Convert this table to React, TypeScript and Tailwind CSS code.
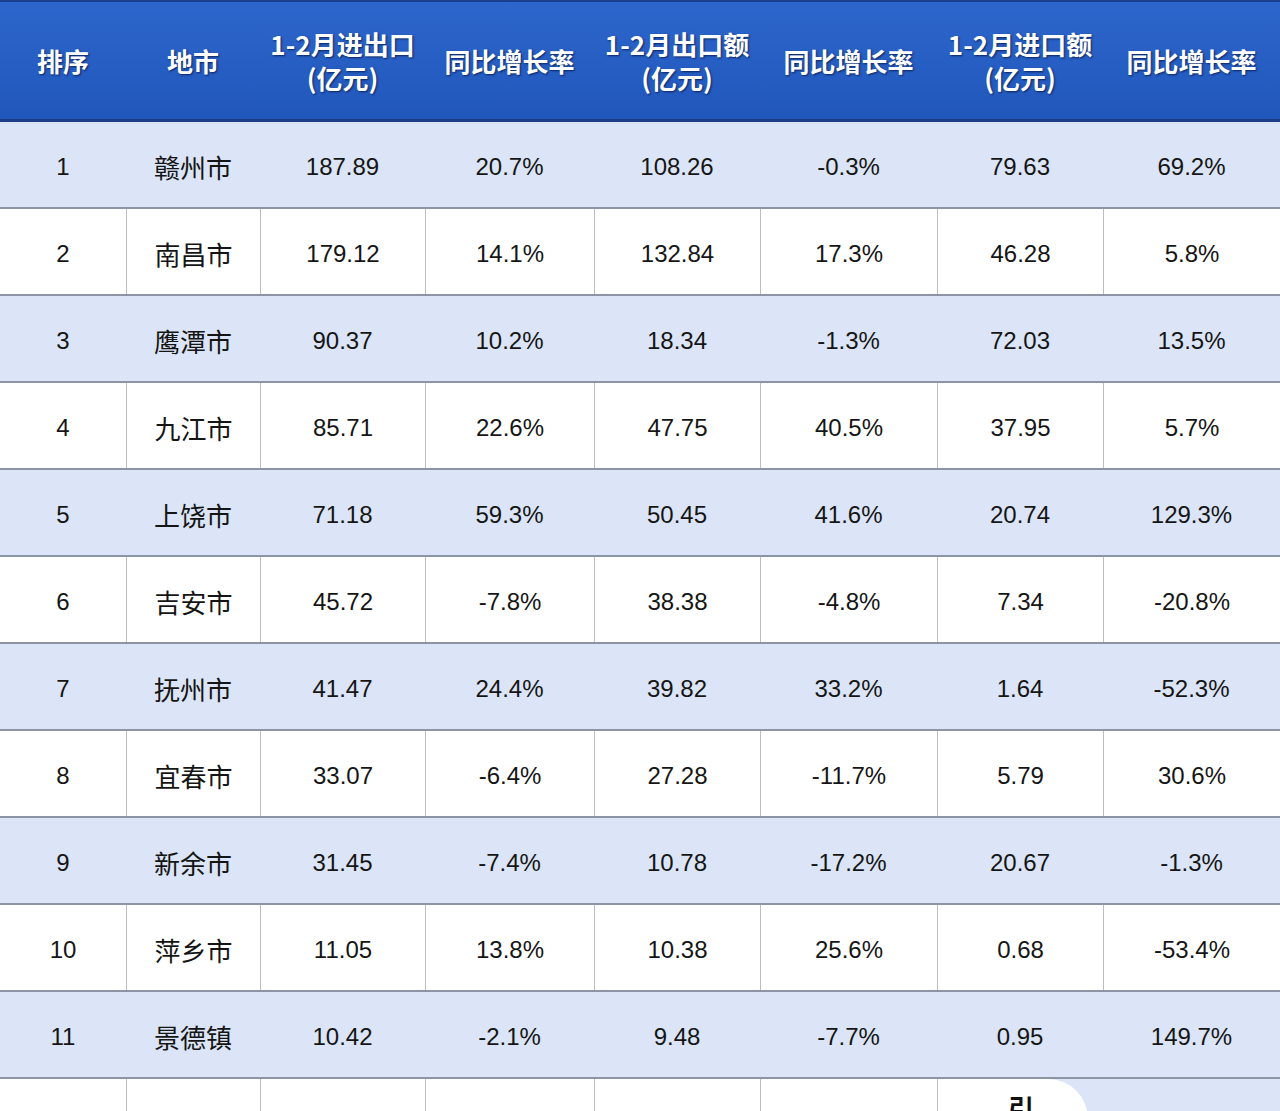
const COLS = ["w-[126px]", "w-[134px]", "w-[165px]", "w-[169px]", "w-[166px]", "w-[177px]", "w-[166px]", "w-[177px]"];

const HEADERS: string[][] = [
  ["排序"],
  ["地市"],
  ["1-2月进出口", "(亿元)"],
  ["同比增长率"],
  ["1-2月出口额", "(亿元)"],
  ["同比增长率"],
  ["1-2月进口额", "(亿元)"],
  ["同比增长率"],
];

const ROWS: string[][] = [
  ["1", "赣州市", "187.89", "20.7%", "108.26", "-0.3%", "79.63", "69.2%"],
  ["2", "南昌市", "179.12", "14.1%", "132.84", "17.3%", "46.28", "5.8%"],
  ["3", "鹰潭市", "90.37", "10.2%", "18.34", "-1.3%", "72.03", "13.5%"],
  ["4", "九江市", "85.71", "22.6%", "47.75", "40.5%", "37.95", "5.7%"],
  ["5", "上饶市", "71.18", "59.3%", "50.45", "41.6%", "20.74", "129.3%"],
  ["6", "吉安市", "45.72", "-7.8%", "38.38", "-4.8%", "7.34", "-20.8%"],
  ["7", "抚州市", "41.47", "24.4%", "39.82", "33.2%", "1.64", "-52.3%"],
  ["8", "宜春市", "33.07", "-6.4%", "27.28", "-11.7%", "5.79", "30.6%"],
  ["9", "新余市", "31.45", "-7.4%", "10.78", "-17.2%", "20.67", "-1.3%"],
  ["10", "萍乡市", "11.05", "13.8%", "10.38", "25.6%", "0.68", "-53.4%"],
  ["11", "景德镇", "10.42", "-2.1%", "9.48", "-7.7%", "0.95", "149.7%"],
];

const FONT = "font-['Liberation_Sans','Noto_Sans_CJK_SC',sans-serif]";

export default function App() {
  return (
    <div className={`w-[1280px] h-[1111px] overflow-hidden bg-white ${FONT}`}>
      {/* 表头 */}
      <div className="flex h-[122px] border-t-2 border-b-[3px] border-t-[#1b3f8f] border-b-[#1a3d85] bg-gradient-to-b from-[#2d66cc] to-[#2157bb]">
        {HEADERS.map((h, i) => (
          <div
            key={i}
            className={`${COLS[i]} shrink-0 flex flex-col items-center justify-center text-white font-bold text-[26px] leading-[34px] [text-shadow:1px_1px_2px_#0b2460] font-['Noto_Sans_CJK_SC',sans-serif]`}
          >
            {h.map((line, j) => (
              <div key={j} className="h-[34px] overflow-visible">{line}</div>
            ))}
          </div>
        ))}
      </div>

      {/* 数据行 */}
      {ROWS.map((row, r) => {
        const blue = r % 2 === 0;
        return (
          <div
            key={r}
            className={`flex h-[87px] border-b-2 border-[#8d95a4] ${blue ? "bg-[#dbe5f7]" : "bg-white"}`}
          >
            {row.map((cell, c) => (
              <div
                key={c}
                className={`${COLS[c]} shrink-0 flex items-center justify-center pt-1 text-[24px] text-[#151515] ${
                  !blue && c > 0 ? "border-l border-[#b9bdc5]" : ""
                } ${c === 1 ? "text-[26px] font-['Noto_Sans_CJK_SC',sans-serif]" : ""}`}
              >
                {cell}
              </div>
            ))}
          </div>
        );
      })}

      {/* 被截断的末行 */}
      <div className="relative h-[40px] bg-[#dbe5f7]">
        <div className="flex h-full w-[1088px] overflow-hidden bg-white rounded-tr-[70px]">
          {COLS.slice(0, 7).map((w, c) => (
            <div key={c} className={`${w} shrink-0 ${c > 0 ? "border-l border-[#b9bdc5]" : ""}`} />
          ))}
        </div>
        <span className="absolute left-[1008px] top-[16px] text-[26px] font-bold leading-none text-[#111] font-['Noto_Sans_CJK_SC',sans-serif]">
          引
        </span>
      </div>
    </div>
  );
}
